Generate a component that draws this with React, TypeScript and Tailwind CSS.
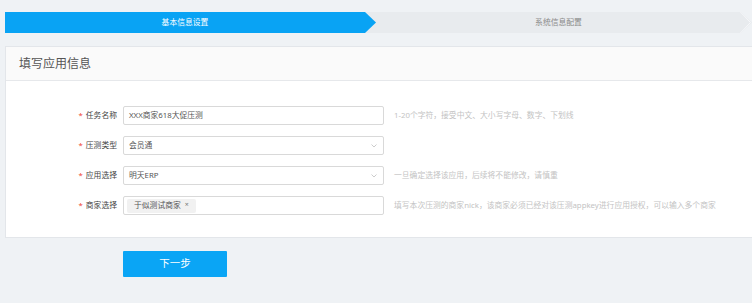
import React from "react";

const font = '"Noto Sans", "Noto Sans CJK SC", sans-serif';

function Chevron() {
  return (
    <svg width="6" height="4" viewBox="0 0 6 4" className="ml-auto mr-[6px]">
      <polyline points="0.5,0.5 3,3 5.5,0.5" fill="none" stroke="#bfbfbf" strokeWidth="0.8" />
    </svg>
  );
}

function Row({ label, help, children }: { label: string; help?: string; children: React.ReactNode }) {
  return (
    <div className="flex items-center h-[19px] mb-[11px] last:mb-0">
      <div className="w-[111px] shrink-0 flex justify-end items-center text-[7.8px] text-[#444]">
        <span className="text-[#f04134] mr-[3px]">*</span>
        {label}
      </div>
      <div className="ml-[6px] w-[261px] h-[19px] shrink-0 border border-[#d9d9d9] rounded-[2px] bg-white flex items-center text-[7.8px] text-[#555]">
        {children}
      </div>
      {help && <div className="ml-[10px] text-[7.8px] text-[#c3c3c3] whitespace-nowrap">{help}</div>}
    </div>
  );
}

export default function App() {
  return (
    <div className="w-[752px] h-[303px] bg-[#eff2f5] overflow-hidden" style={{ fontFamily: font }}>
      {/* 步骤条 */}
      <div className="pt-[12px] pl-[5px] flex h-[33px]">
        <div className="relative z-10 w-[371px] h-[21px] shrink-0 bg-[#09a3f4] pr-[11px] flex items-center justify-center text-[7.8px] text-white [clip-path:polygon(0_0,calc(100%_-_11px)_0,100%_50%,calc(100%_-_11px)_100%,0_100%)]">
          基本信息设置
        </div>
        <div className="relative ml-[-11px] w-[387px] h-[21px] shrink-0 bg-[#e8ebee] pl-[11px] pr-[11px] flex items-center justify-center text-[7.8px] text-[#8a8a8a] [clip-path:polygon(0_0,calc(100%_-_11px)_0,100%_50%,calc(100%_-_11px)_100%,0_100%)]">
          系统信息配置
          <svg width="12" height="21" viewBox="0 0 12 21" className="absolute right-0 top-0">
            <polyline points="0.5,0 10.5,10.5 0.5,21" fill="none" stroke="#f7f8fa" strokeWidth="1" />
          </svg>
        </div>
      </div>

      {/* 表单卡片 */}
      <div className="mt-[13px] ml-[5px] w-[770px] border border-[#e3e6ea] bg-white">
        <div className="h-[34px] bg-[#fafafa] border-b border-[#e6e8eb] flex items-center pl-[13px] text-[12px] text-[#555]">
          填写应用信息
        </div>
        <div className="pt-[25px] pb-[22px]">
          <Row label="任务名称" help="1-20个字符，接受中文、大小写字母、数字、下划线">
            <span className="pl-[5px]">XXX商家618大促压测</span>
          </Row>
          <Row label="压测类型">
            <span className="pl-[5px]">会员通</span>
            <Chevron />
          </Row>
          <Row label="应用选择" help="一旦确定选择该应用，后续将不能修改，请慎重">
            <span className="pl-[5px]">明天ERP</span>
            <Chevron />
          </Row>
          <Row label="商家选择" help="填写本次压测的商家nick，该商家必须已经对该压测appkey进行应用授权，可以输入多个商家">
            <span className="ml-[3px] h-[14px] px-[7px] bg-[#f1f1f1] rounded-[2px] flex items-center text-[#555]">
              于似测试商家
              <span className="ml-[4px] text-[7px] text-[#777]">×</span>
            </span>
          </Row>
        </div>
      </div>

      <button className="mt-[13px] ml-[123px] w-[104px] h-[26px] bg-[#0aa5f5] rounded-[1px] text-white text-[10.5px] flex items-center justify-center">
        下一步
      </button>
    </div>
  );
}
